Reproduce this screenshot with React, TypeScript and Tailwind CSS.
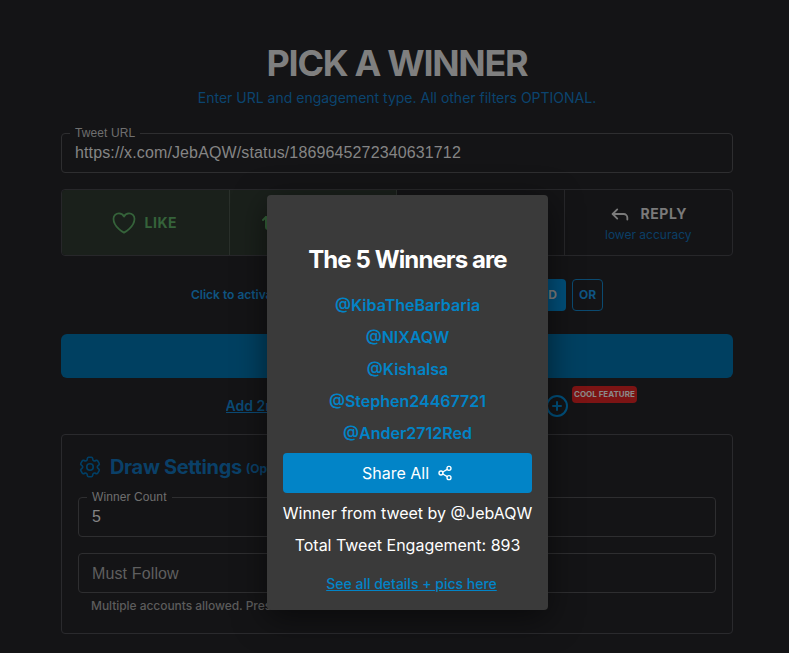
import React from "react";
import { Repeat2, Reply, Share2, CirclePlus } from "lucide-react";

const font = { fontFamily: "Inter, 'Liberation Sans', sans-serif" };

function Field({ label, value, placeholder, className = "" }: { label?: string; value?: string; placeholder?: string; className?: string }) {
  return (
    <div className={`relative h-10 rounded border border-[#2e2e30] flex items-center px-[13px] ${className}`}>
      {label && (
        <span className="absolute -top-[8px] left-[8px] px-[5px] bg-[#141416] text-[12px] leading-[14px] tracking-[0.1px] font-['Liberation_Sans'] text-[#6f6f6f]">{label}</span>
      )}
      {value && <span className="text-[16px] tracking-[0.13px] text-[#858585] font-['Liberation_Sans']">{value}</span>}
      {placeholder && <span className="mt-[1px] text-[16px] tracking-[0.13px] text-[#5f5f5f] font-['Liberation_Sans']">{placeholder}</span>}
    </div>
  );
}

export default function App() {
  return (
    <div style={font} className="relative w-[789px] h-[653px] overflow-hidden bg-[#141416]">
      <div className="w-[672px] ml-[61px] pt-[41px] flex flex-col">
        <h1 className="text-center text-[36px] leading-[44px] font-bold tracking-[-1.3px] text-[#7f7f7f]">PICK A WINNER</h1>
        <p className="text-center text-[14px] leading-[20px] mt-[3px] text-[#0b446f]">Enter URL and engagement type. All other filters OPTIONAL.</p>

        <Field label="Tweet URL" value="https://x.com/JebAQW/status/1869645272340631712" className="mt-[25px]" />

        <div className="mt-[16px] h-[67px] grid grid-cols-4 rounded border border-[#27272a]">
          <div className="flex items-center justify-center gap-[7px] pr-[4px] bg-[#1a201b] border-r border-[#2a302b] rounded-l text-[#35633a]">
            <svg width="28" height="28" viewBox="0 0 24 24" fill="none" stroke="currentColor" strokeWidth="1.5" strokeLinecap="round" strokeLinejoin="round">
              <path d="M21 8.25c0-2.485-2.099-4.5-4.688-4.5-1.935 0-3.597 1.126-4.312 2.733-.715-1.607-2.377-2.733-4.313-2.733C5.1 3.75 3 5.765 3 8.25c0 7.22 9 12 9 12s9-4.78 9-12z" />
            </svg>
            <span className="text-[14px] font-bold tracking-[0.5px]">LIKE</span>
          </div>
          <div className="flex items-center justify-center gap-[8px] bg-[#1a201b] border-r border-[#2a302b] text-[#35633a]">
            <Repeat2 size={24} />
            <span className="text-[14px] font-bold tracking-[0.5px]">RETWEET</span>
          </div>
          <div className="border-r border-[#27272a]" />
          <div className="flex flex-col items-center justify-center">
            <div className="flex items-center gap-[9px] text-[#7a7a7a]">
              <Reply size={22} />
              <span className="text-[14px] font-bold tracking-[0.6px]">REPLY</span>
            </div>
            <span className="text-[12px] leading-[16px] mt-[2px] text-[#0b3f66]">lower accuracy</span>
          </div>
        </div>

        <div className="mt-[23px] h-[32px] flex items-center justify-center gap-[6px]">
          <span className="w-[324px] whitespace-nowrap overflow-hidden text-[12px] font-semibold text-[#0f5482]">Click to activate multiple engagement types at once</span>
          <span className="h-[32px] w-[45px] rounded bg-[#004f7a] text-[#7f7f7f] text-[12px] font-bold flex items-center justify-center">AND</span>
          <span className="h-[32px] w-[31px] rounded border border-[#0b4a70] text-[#0f5482] text-[12px] font-bold flex items-center justify-center">OR</span>
        </div>

        <div className="mt-[23px] h-[44px] rounded-md bg-[#004061]" />

        <div className="mt-[14px] h-[26px] relative flex items-center justify-center gap-[6px]">
          <span className="w-[314px] whitespace-nowrap overflow-hidden text-[14px] font-semibold underline text-[#0b4a75]">Add 2nd tweet to draw from multiple posts</span>
          <CirclePlus size={24} strokeWidth={2} className="text-[#00507c] mt-[1px] -ml-[1px]" />
          <span className="absolute left-[511px] -top-[6px] h-[17px] px-[2px] rounded bg-[#7c1414] text-[8px] leading-[17px] font-bold text-[#8a8a8a]">COOL FEATURE</span>
        </div>

        <div className="mt-[16px] h-[200px] rounded border border-[#2a2a2d] px-[16px] pt-[18px] flex flex-col">
          <div className="flex items-center gap-[6px] h-[28px]">
            <svg width="26" height="26" viewBox="0 0 24 24" fill="none" stroke="#003f66" strokeWidth="1.5" strokeLinecap="round" strokeLinejoin="round" className="-ml-[1px] mr-[1px]">
              <path d="M9.594 3.94c.09-.542.56-.94 1.11-.94h2.593c.55 0 1.02.398 1.11.94l.213 1.281c.063.374.313.686.645.87.074.04.147.083.22.127.324.196.72.257 1.075.124l1.217-.456a1.125 1.125 0 011.37.49l1.296 2.247a1.125 1.125 0 01-.26 1.431l-1.003.827c-.293.24-.438.613-.431.992a6.759 6.759 0 010 .255c-.007.378.138.75.43.99l1.005.828c.424.35.534.954.26 1.43l-1.298 2.247a1.125 1.125 0 01-1.369.491l-1.217-.456c-.355-.133-.75-.072-1.076.124a6.57 6.57 0 01-.22.128c-.331.183-.581.495-.644.869l-.213 1.28c-.09.543-.56.941-1.11.941h-2.594c-.55 0-1.02-.398-1.11-.94l-.213-1.281c-.062-.374-.312-.686-.644-.87a6.52 6.52 0 01-.22-.127c-.325-.196-.72-.257-1.076-.124l-1.217.456a1.125 1.125 0 01-1.369-.49l-1.297-2.247a1.125 1.125 0 01.26-1.431l1.004-.827c.292-.24.437-.613.43-.992a6.932 6.932 0 010-.255c.007-.378-.138-.75-.43-.99l-1.004-.828a1.125 1.125 0 01-.26-1.43l1.297-2.247a1.125 1.125 0 011.37-.491l1.216.456c.356.133.751.072 1.076-.124.072-.044.146-.087.22-.128.332-.183.582-.495.644-.869l.214-1.281z" />
              <path d="M15 12a3 3 0 11-6 0 3 3 0 016 0z" />
            </svg>
            <span className="text-[20px] font-bold tracking-[-0.35px] text-[#0a4068]">Draw Settings</span>
            <span className="text-[12px] font-bold text-[#0a4068] -ml-[2px] mt-[3px]">(Optional)</span>
          </div>
          <Field label="Winner Count" value="5" className="mt-[16px]" />
          <Field placeholder="Must Follow" className="mt-[16px]" />
          <p className="mt-[5px] px-[13px] text-[12px] font-medium leading-[16px] tracking-[-0.05px] text-[#5c5c5c]">Multiple accounts allowed. Press enter after each one to add it.</p>
        </div>
      </div>

      <div className="absolute left-[267px] top-[195px] w-[281px] h-[415px] rounded bg-[#3a3a3a] px-[16px] pt-[49px] flex flex-col items-center shadow-[0_8px_32px_rgba(0,0,0,0.5)]">
        <h2 className="text-[24px] leading-[32px] font-bold tracking-[-0.9px] text-white whitespace-nowrap">The 5 Winners are</h2>
        <div className="mt-[13px] flex flex-col items-center text-[16px] leading-[32px] font-semibold text-[#0284c7]">
          <span>@KibaTheBarbaria</span>
          <span>@NIXAQW</span>
          <span>@Kishalsa</span>
          <span>@Stephen24467721</span>
          <span>@Ander2712Red</span>
        </div>
        <button className="mt-[4px] h-[40px] w-full shrink-0 rounded bg-[#0284c7] text-white text-[16px] font-normal flex items-center justify-center gap-[8px]">
          Share All <Share2 size={16} />
        </button>
        <p className="mt-[4px] text-[16px] leading-[32px] font-normal text-white whitespace-nowrap">Winner from tweet by @JebAQW</p>
        <p className="text-[16px] leading-[32px] font-normal text-white whitespace-nowrap">Total Tweet Engagement: 893</p>
        <a className="mt-[13px] ml-[8px] text-[14px] leading-[20px] font-medium underline text-[#0284c7]">See all details + pics here</a>
      </div>
    </div>
  );
}
